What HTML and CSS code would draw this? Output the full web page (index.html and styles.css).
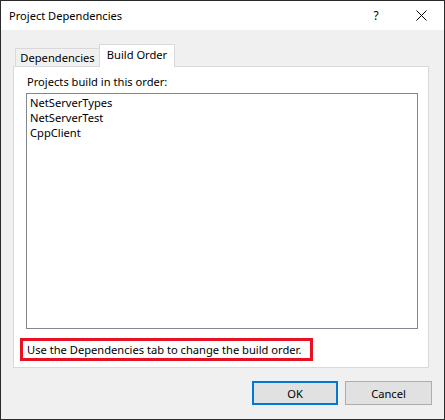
FILE: index.html
```html
<!DOCTYPE html>
<html>
<head>
<meta charset="utf-8">
<link rel="stylesheet" href="styles.css">
</head>
<body>
<div class="window">
  <div class="titlebar">
    <span class="title">Project Dependencies</span>
    <div class="caption-btns">
      <span class="cap-btn help">?</span>
      <span class="cap-btn close">
        <svg width="11" height="11" viewBox="0 0 11 11"><path d="M0.5 0.5 L10.5 10.5 M10.5 0.5 L0.5 10.5" stroke="#000" stroke-width="1" fill="none"/></svg>
      </span>
    </div>
  </div>
  <div class="body">
    <div class="tabs">
      <div class="tab">Dependencies</div>
      <div class="tab active">Build Order</div>
    </div>
    <div class="panel">
      <div class="label">Projects build in this order:</div>
      <div class="listbox">
        <div class="item">NetServerTypes</div>
        <div class="item">NetServerTest</div>
        <div class="item">CppClient</div>
      </div>
      <div class="note">Use the Dependencies tab to change the build order.</div>
    </div>
    <div class="buttons">
      <button class="btn default">OK</button>
      <button class="btn">Cancel</button>
    </div>
  </div>
</div>
</body>
</html>
```

FILE: styles.css
```css
html, body {
  margin: 0;
  padding: 0;
  background: #ffffff;
}
body {
  font-family: "Noto Sans", "Liberation Sans", sans-serif;
  font-size: 11.15px;
  line-height: 15px;
  color: #000;
}
.window {
  box-sizing: border-box;
  width: 445px;
  height: 420px;
  border: 1px solid #2b2b2b;
  display: flex;
  flex-direction: column;
}
.titlebar {
  height: 29px;
  background: #fff;
  display: flex;
  align-items: center;
  flex: none;
}
.title {
  padding-left: 8px;
  font-size: 11.1px;
  flex: 1;
}
.caption-btns {
  display: flex;
  height: 29px;
}
.cap-btn {
  width: 45px;
  height: 29px;
  display: flex;
  align-items: center;
  justify-content: center;
}
.help {
  font-size: 12px;
  padding-bottom: 1px;
  padding-right: 1px;
  box-sizing: border-box;
}
.close svg {
  display: block;
}
.body {
  flex: 1;
  background: #f0f0f0;
  padding: 14px 15px 0 12px;
  display: flex;
  flex-direction: column;
}
.tabs {
  display: flex;
  align-items: flex-end;
  height: 22px;
  padding-left: 2px;
}
.tab {
  box-sizing: border-box;
  height: 18px;
  width: 85px;
  border: 1px solid #d9d9d9;
  border-bottom: none;
  background: #f0f0f0;
  display: flex;
  align-items: center;
  justify-content: center;
}
.tab.active {
  position: relative;
  z-index: 1;
  width: 76px;
  height: 23px;
  margin-left: -1px;
  margin-bottom: -1px;
  background: #fff;
  padding-bottom: 4px;
}
.panel {
  box-sizing: border-box;
  height: 302px;
  border: 1px solid #d9d9d9;
  background: #fff;
  padding: 7px 10px 0 12px;
  display: flex;
  flex-direction: column;
  align-items: flex-start;
}
.label {
  padding-left: 1px;
}
.listbox {
  box-sizing: border-box;
  align-self: stretch;
  margin-top: 4px;
  height: 236px;
  border: 1px solid #828790;
  background: #fff;
  padding: 1px 3px;
}
.note {
  box-sizing: border-box;
  margin-top: 9px;
  margin-left: -6px;
  width: 293px;
  height: 23px;
  border: 3px solid #e81123;
  padding: 1px 0 0 4px;
  white-space: nowrap;
}
.buttons {
  display: flex;
  justify-content: flex-end;
  gap: 7px;
  margin-top: 13px;
  margin-right: -3px;
}
.btn {
  box-sizing: border-box;
  width: 87px;
  height: 24px;
  background: #e1e1e1;
  border: 1px solid #adadad;
  font-family: inherit;
  font-size: 11.15px;
  color: #000;
  padding: 0;
  margin: 0;
}
.btn.default {
  width: 86px;
  border: 2px solid #0078d7;
}
```
